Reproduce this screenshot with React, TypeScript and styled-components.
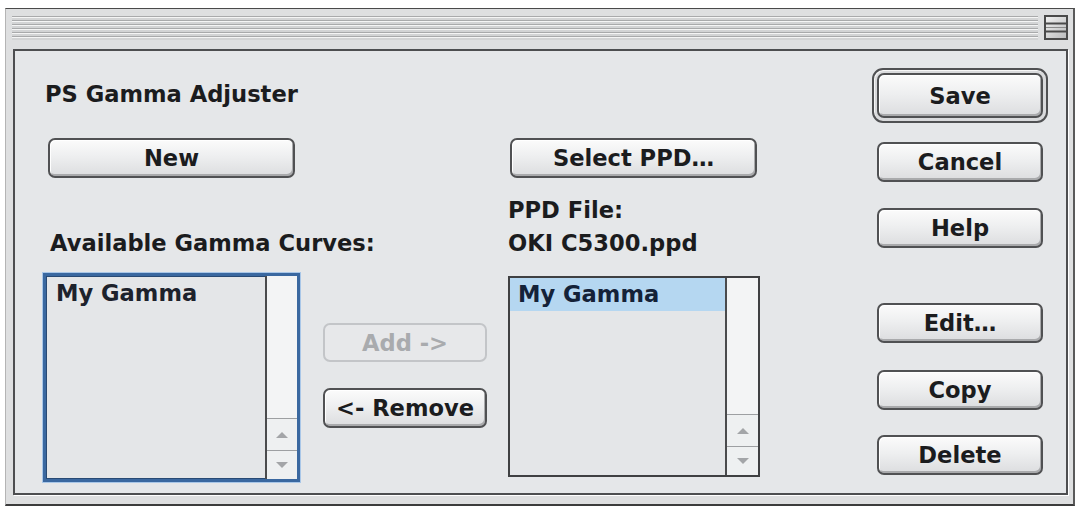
import React from "react";
import styled, { createGlobalStyle } from "styled-components";

const GlobalStyle = createGlobalStyle`
  html, body {
    margin: 0;
    padding: 0;
    background: #ffffff;
  }
  body {
    font-family: "DejaVu Sans", "Liberation Sans", sans-serif;
  }
`;

const Window = styled.div`
  box-sizing: border-box;
  width: 1070px;
  height: 498px;
  margin: 8px 0 0 5px;
  display: flex;
  flex-direction: column;
  background: #dedfe0;
  border-top: 1px solid #4a4a4a;
  border-left: 1px solid #b4b4b4;
  border-right: 2px solid #5a5a5a;
  border-bottom: 2px solid #3c3c3c;
`;

const TitleBar = styled.div`
  display: flex;
  align-items: stretch;
  height: 25px;
  margin-top: 6px;
  padding: 0 5px 0 6px;
  gap: 6px;

  .stripes {
    flex: 1;
    margin-top: 1px;
    background: repeating-linear-gradient(
      to bottom,
      #a9aaab 0px,
      #a9aaab 1px,
      #f5f5f5 1px,
      #f5f5f5 2px,
      #d3d4d5 2px,
      #d3d4d5 4px
    );
  }
`;

const Panel = styled.div`
  box-sizing: border-box;
  flex: 1;
  margin: 9px 5px 9px 7px;
  display: flex;
  align-items: flex-start;
  padding-left: 28px;
  background: #e5e7e9;
  border: 2px solid #4d4e50;
  box-shadow: 1px 1px 0 #ffffff;
`;

const Column = styled.div<{ $w: number; $top: number; $ml?: number }>`
  display: flex;
  flex-direction: column;
  align-items: flex-start;
  width: ${(p) => p.$w}px;
  padding-top: ${(p) => p.$top}px;
  margin-left: ${(p) => p.$ml ?? 0}px;
  flex-shrink: 0;
`;

const Label = styled.div<{ $mt?: number; $ml?: number }>`
  font-size: 22.6px;
  line-height: 26px;
  font-weight: bold;
  color: #1b1c1e;
  white-space: nowrap;
  margin-top: ${(p) => p.$mt ?? 0}px;
  margin-left: ${(p) => p.$ml ?? 0}px;
`;

const Button = styled.div<{
  $w: number;
  $h?: number;
  $mt?: number;
  $ml?: number;
  $disabled?: boolean;
}>`
  box-sizing: border-box;
  width: ${(p) => p.$w}px;
  height: ${(p) => p.$h ?? 40}px;
  margin-top: ${(p) => p.$mt ?? 0}px;
  margin-left: ${(p) => p.$ml ?? 0}px;
  display: flex;
  align-items: center;
  justify-content: center;
  border-radius: 7px;
  font-size: 22.6px;
  font-weight: bold;
  white-space: nowrap;
  border: 2px solid ${(p) => (p.$disabled ? "#c3c5c8" : "#505153")};
  color: ${(p) => (p.$disabled ? "#a9abae" : "#1b1c1e")};
  background: ${(p) =>
    p.$disabled
      ? "#e7e8ea"
      : "linear-gradient(to bottom, #fbfbfb 0%, #eeeff0 45%, #dcdddf 100%)"};
  box-shadow: ${(p) =>
    p.$disabled
      ? "none"
      : "inset 1px 1px 0 #ffffff, inset -1px -2px 0 #a9aaac"};
`;

const DefaultRing = styled.div<{ $w: number }>`
  box-sizing: border-box;
  width: ${(p) => p.$w}px;
  padding: 3px;
  border: 2px solid #505153;
  border-radius: 11px;
  background: #d9dadc;
  box-shadow: inset 1px 1px 0 #f6f6f6;
`;

const ListBox = styled.div<{ $w: number; $h: number; $mt?: number; $focused?: boolean }>`
  box-sizing: border-box;
  width: ${(p) => p.$w}px;
  height: ${(p) => p.$h}px;
  margin-top: ${(p) => p.$mt ?? 0}px;
  display: flex;
  background: #e4e6e8;
  border: ${(p) => (p.$focused ? "3px solid #3a68a0" : "2px solid #3f4042")};
  box-shadow: ${(p) =>
    p.$focused ? "0 0 0 1px #a9c7e8, inset 0 0 0 1px #284a74" : "none"};
`;

const Items = styled.div<{ $pad: number }>`
  flex: 1;
  display: flex;
  flex-direction: column;
  padding-top: ${(p) => (p.$pad > 8 ? 1 : 0)}px;

  .row {
    height: 33px;
    line-height: 33px;
    padding-left: ${(p) => p.$pad}px;
    font-size: 22.6px;
    font-weight: bold;
    color: #1d222c;
    white-space: nowrap;
  }
  .row.selected {
    background: #b5d7f1;
    color: #142238;
  }
`;

const ScrollBar = styled.div<{ $w: number }>`
  width: ${(p) => p.$w}px;
  display: flex;
  flex-direction: column;
  border-left: 2px solid #4a4b4d;
  background: #f3f4f5;

  .track {
    flex: 1;
  }
  .arrow {
    height: 31px;
    display: flex;
    align-items: center;
    justify-content: center;
    border-top: 1px solid #9d9fa2;
    background: #eef0f1;
  }
  .arrow + .arrow {
    height: 28px;
  }
`;

const WindowShade = () => (
  <svg width="24" height="25" viewBox="0 0 24 25">
    <defs>
      <linearGradient id="ws" x1="0" y1="0" x2="1" y2="1">
        <stop offset="0" stopColor="#f2f2f2" />
        <stop offset="1" stopColor="#b9babb" />
      </linearGradient>
    </defs>
    <rect x="1" y="1" width="22" height="23" fill="url(#ws)" stroke="#4a4a4a" strokeWidth="2" />
    <line x1="2" y1="8.5" x2="22" y2="8.5" stroke="#4a4a4a" strokeWidth="2" />
    <line x1="2" y1="12.5" x2="22" y2="12.5" stroke="#8a8a8a" strokeWidth="1" />
    <line x1="2" y1="16.5" x2="22" y2="16.5" stroke="#4a4a4a" strokeWidth="2" />
  </svg>
);

const Arrow = ({ up }: { up?: boolean }) => (
  <svg width="14" height="8" viewBox="0 0 14 8">
    <polygon points={up ? "1,7 13,7 7,1" : "1,1 13,1 7,7"} fill="#a3a5a8" />
  </svg>
);

interface ListProps {
  w: number;
  h: number;
  mt: number;
  focused?: boolean;
  item: string;
  selected?: boolean;
  pad: number;
  barW: number;
}

const List = ({ w, h, mt, focused, item, selected, pad, barW }: ListProps) => (
  <ListBox $w={w} $h={h} $mt={mt} $focused={focused}>
    <Items $pad={pad}>
      <div className={selected ? "row selected" : "row"}>{item}</div>
    </Items>
    <ScrollBar $w={barW}>
      <div className="track" />
      <div className="arrow">
        <Arrow up />
      </div>
      <div className="arrow">
        <Arrow />
      </div>
    </ScrollBar>
  </ListBox>
);

export default function App() {
  return (
    <>
      <GlobalStyle />
      <Window>
        <TitleBar>
          <div className="stripes" />
          <WindowShade />
        </TitleBar>
        <Panel>
          <Column $w={257} $top={30}>
            <Label $ml={2}>PS Gamma Adjuster</Label>
            <Button $w={247} $mt={31} $ml={5}>
              New
            </Button>
            <Label $mt={52} $ml={7}>
              Available Gamma Curves:
            </Label>
            <List w={257} h={209} mt={17} focused item="My Gamma" pad={10} barW={30} />
          </Column>

          <Column $w={164} $top={272} $ml={23}>
            <Button $w={164} $h={39} $disabled>
              Add -&gt;
            </Button>
            <Button $w={164} $mt={26}>
              &lt;- Remove
            </Button>
          </Column>

          <Column $w={252} $top={87} $ml={21}>
            <Button $w={247} $ml={2}>
              Select PPD…
            </Button>
            <Label $mt={19}>PPD File:</Label>
            <Label $mt={7}>OKI C5300.ppd</Label>
            <List w={252} h={201} mt={20} item="My Gamma" selected pad={8} barW={31} />
          </Column>

          <Column $w={176} $top={17} $ml={112}>
            <DefaultRing $w={176}>
              <Button $w={166} $h={45}>
                Save
              </Button>
            </DefaultRing>
            <Button $w={166} $mt={19} $ml={5}>
              Cancel
            </Button>
            <Button $w={166} $mt={26} $ml={5}>
              Help
            </Button>
            <Button $w={166} $mt={55} $ml={5}>
              Edit…
            </Button>
            <Button $w={166} $mt={27} $ml={5}>
              Copy
            </Button>
            <Button $w={166} $mt={25} $ml={5}>
              Delete
            </Button>
          </Column>
        </Panel>
      </Window>
    </>
  );
}
